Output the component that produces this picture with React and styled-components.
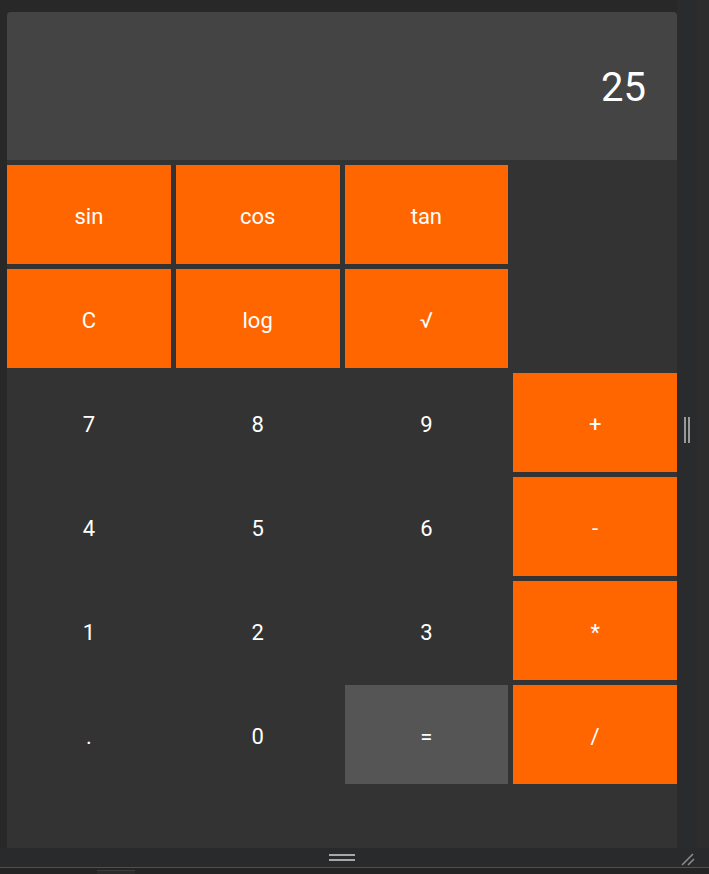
import React, { useState } from 'react';
import styled, { createGlobalStyle } from 'styled-components';

const GlobalStyle = createGlobalStyle`
  html, body {
    margin: 0;
    padding: 0;
    background: #282828;
    font-family: Roboto, 'Liberation Sans', sans-serif;
    overflow: hidden;
  }
`;

const Page = styled.div`
  width: 709px;
  height: 874px;
  display: flex;
  flex-direction: column;
`;

const Workspace = styled.div`
  display: flex;
  height: 848px;
`;

const Pane = styled.div`
  padding: 12px 0 0 7px;
  width: 670px;
`;

const Calculator = styled.div`
  width: 670px;
  height: 836px;
  background: #333333;
  border-radius: 4px 4px 0 0;
  overflow: hidden;
  display: flex;
  flex-direction: column;
`;

const Display = styled.div`
  height: 148px;
  background: #444444;
  display: flex;
  align-items: center;
  justify-content: flex-end;
  padding: 2px 31px 0 0;
  box-sizing: border-box;
  color: #ffffff;
  font-size: 40px;
`;

const Keys = styled.div`
  display: grid;
  grid-template-columns: repeat(4, 1fr);
  grid-auto-rows: 99px;
  gap: 5px;
  padding-top: 5px;
`;

const Key = styled.button`
  border: none;
  margin: 0;
  padding: 3px 0 0;
  font-family: Roboto, 'Liberation Sans', sans-serif;
  font-size: 22px;
  color: #ffffff;
  cursor: pointer;
  background: ${p => (p.$kind === 'op' ? '#ff6600' : p.$kind === 'eq' ? '#555555' : '#333333')};
  grid-column: ${p => p.$col};
  grid-row: ${p => p.$row};
`;

const Gutter = styled.div`
  flex: 1;
  display: flex;
`;

const SplitBar = styled.div`
  width: 20px;
  background: #2a2b2d;
  display: flex;
  align-items: center;
  justify-content: center;
  padding-top: 12px;
  gap: 2px;
`;

const Grip = styled.span`
  width: 2px;
  height: 26px;
  background: #9a9a9a;
`;

const Track = styled.div`
  flex: 1;
  background: #2d2d2d;
`;

const BottomBar = styled.div`
  height: 20px;
  background: #292a2c;
  display: flex;
  align-items: center;
  position: relative;
`;

const HandleArea = styled.div`
  width: 670px;
  margin-left: 7px;
  display: flex;
  flex-direction: column;
  align-items: center;
  gap: 3px;
`;

const HLine = styled.span`
  width: 26px;
  height: 2px;
  background: #a8a8a8;
`;

const Resize = styled.svg`
  position: absolute;
  right: 14px;
  top: 4px;
`;

const Footer = styled.div`
  height: 6px;
  border-top: 1px solid #505050;
  background: #242424;
  position: relative;
`;

const Tab = styled.span`
  position: absolute;
  left: 97px;
  top: 2px;
  width: 38px;
  height: 4px;
  border-top: 1px solid #3c3c3c;
  background: #2a2a2a;
`;

const layout = [
  [['sin', 'op'], ['cos', 'op'], ['tan', 'op']],
  [['C', 'op'], ['log', 'op'], ['√', 'op']],
  [['7'], ['8'], ['9'], ['+', 'op']],
  [['4'], ['5'], ['6'], ['-', 'op']],
  [['1'], ['2'], ['3'], ['*', 'op']],
  [['.'], ['0'], ['=', 'eq'], ['/', 'op']],
];

export default function App() {
  const [value] = useState('25');

  return (
    <>
      <GlobalStyle />
      <Page>
        <Workspace>
          <Pane>
            <Calculator>
              <Display>{value}</Display>
              <Keys>
                {layout.map((row, r) =>
                  row.map(([label, kind], c) => (
                    <Key key={label} $kind={kind} $row={r + 1} $col={c + 1}>
                      {label}
                    </Key>
                  ))
                )}
              </Keys>
            </Calculator>
          </Pane>
          <Gutter>
            <SplitBar>
              <Grip />
              <Grip />
            </SplitBar>
            <Track />
          </Gutter>
        </Workspace>
        <BottomBar>
          <HandleArea>
            <HLine />
            <HLine />
          </HandleArea>
          <Resize width="14" height="14" viewBox="0 0 14 14">
            <path d="M1 13 L12 2 M7 13 L13 7" stroke="#8a8a8a" strokeWidth="1.6" />
          </Resize>
        </BottomBar>
        <Footer>
          <Tab />
        </Footer>
      </Page>
    </>
  );
}
